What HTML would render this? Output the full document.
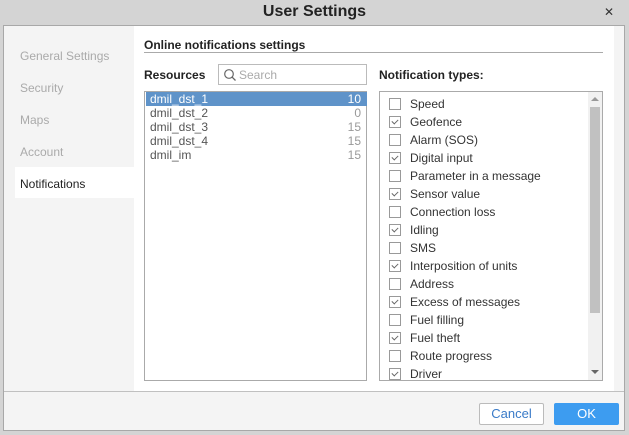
<!DOCTYPE html>
<html><head><style>
*{box-sizing:border-box;margin:0;padding:0}
body{width:629px;height:435px;background:#d4d4d4;font-family:"Liberation Sans",Arial,sans-serif;font-size:12px;position:relative;overflow:hidden;color:#222}
.abs{position:absolute}
.title{left:0;top:0;width:629px;height:25px;text-align:center;font-weight:bold;font-size:16px;line-height:23px;color:#222}
.x{left:604px;top:5px;font-size:12px;color:#333}
.dlg{left:3px;top:25px;width:622px;height:406px;background:#f4f4f4;border:1px solid #a8a8a8}
.side{left:0;top:0;width:130px;height:365px;background:#f4f4f4}
.si{left:16px;color:#aaa;font-size:12px}
.main{left:130px;top:0;width:480px;height:365px;background:#fff}
.foot{left:0;top:365px;width:620px;height:1px;background:#c0c0c0}
.row{position:absolute;left:1px;width:221px;height:14px;line-height:14px;padding:0 6px 0 4px;color:#555}
.row span{float:right;color:#999}
.nt{position:absolute;left:9px;height:18px;line-height:18px;color:#333}
.cb{display:inline-block;width:12px;height:12px;border:1px solid #999;vertical-align:-2px;margin-right:9px;background:#fff;position:relative}
.cb.c::after{content:"";position:absolute;left:3px;top:1px;width:3px;height:5px;border:solid #666;border-width:0 1.5px 1.5px 0;transform:rotate(45deg)}
.btn{position:absolute;top:377px;width:65px;height:22px;border-radius:2px;text-align:center;line-height:20px;font-size:13px}
</style></head><body>
<div class="abs title">User Settings</div>
<div class="abs x">✕</div>
<div class="abs dlg">
 <div class="abs side"></div>
 <div class="abs" style="left:11px;top:141px;width:119px;height:31px;background:#fff"></div>
 <div class="abs si" style="top:23px">General Settings</div>
 <div class="abs si" style="top:55px">Security</div>
 <div class="abs si" style="top:87px">Maps</div>
 <div class="abs si" style="top:119px">Account</div>
 <div class="abs si" style="top:151px;color:#222">Notifications</div>
 <div class="abs main">
  <div class="abs" style="left:10px;top:12px;font-weight:bold;color:#222">Online notifications settings</div>
  <div class="abs" style="left:10px;top:26px;width:459px;height:1px;background:#aaa"></div>
  <div class="abs" style="left:10px;top:42px;font-weight:bold;color:#222">Resources</div>
  <div class="abs" style="left:84px;top:38px;width:149px;height:21px;border:1px solid #bbb">
   <svg class="abs" style="left:4px;top:3px" width="14" height="14" viewBox="0 0 14 14"><circle cx="6" cy="6" r="4.3" fill="none" stroke="#666" stroke-width="1.2"/><line x1="9.2" y1="9.2" x2="12.5" y2="12.5" stroke="#666" stroke-width="1.3"/></svg>
   <div class="abs" style="left:20px;top:3px;color:#aaa">Search</div>
  </div>
  <div class="abs" style="left:10px;top:65px;width:223px;height:290px;border:1px solid #aaa">
   <div class="row" style="top:0;background:#5f93c9;color:#fff">dmil_dst_1<span style="color:#fff">10</span></div>
   <div class="row" style="top:14px">dmil_dst_2<span>0</span></div>
   <div class="row" style="top:28px">dmil_dst_3<span>15</span></div>
   <div class="row" style="top:42px">dmil_dst_4<span>15</span></div>
   <div class="row" style="top:56px">dmil_im<span>15</span></div>
  </div>
  <div class="abs" style="left:245px;top:42px;font-weight:bold;color:#222">Notification types:</div>
  <div class="abs" style="left:245px;top:65px;width:224px;height:290px;border:1px solid #aaa;overflow:hidden">
   <div class="nt" style="top:3px"><i class="cb"></i>Speed</div>
   <div class="nt" style="top:21px"><i class="cb c"></i>Geofence</div>
   <div class="nt" style="top:39px"><i class="cb"></i>Alarm (SOS)</div>
   <div class="nt" style="top:57px"><i class="cb c"></i>Digital input</div>
   <div class="nt" style="top:75px"><i class="cb"></i>Parameter in a message</div>
   <div class="nt" style="top:93px"><i class="cb c"></i>Sensor value</div>
   <div class="nt" style="top:111px"><i class="cb"></i>Connection loss</div>
   <div class="nt" style="top:129px"><i class="cb c"></i>Idling</div>
   <div class="nt" style="top:147px"><i class="cb"></i>SMS</div>
   <div class="nt" style="top:165px"><i class="cb c"></i>Interposition of units</div>
   <div class="nt" style="top:183px"><i class="cb"></i>Address</div>
   <div class="nt" style="top:201px"><i class="cb c"></i>Excess of messages</div>
   <div class="nt" style="top:219px"><i class="cb"></i>Fuel filling</div>
   <div class="nt" style="top:237px"><i class="cb c"></i>Fuel theft</div>
   <div class="nt" style="top:255px"><i class="cb"></i>Route progress</div>
   <div class="nt" style="top:273px"><i class="cb c"></i>Driver</div>
   <div class="abs" style="left:208px;top:0;width:14px;height:288px;background:#f1f1f1"></div>
   <div class="abs" style="left:210px;top:15px;width:10px;height:206px;background:#c1c1c1"></div>
   <div class="abs" style="left:211px;top:5px;width:0;height:0;border:4px solid transparent;border-bottom:4px solid #999;border-top:0"></div>
   <div class="abs" style="left:211px;top:278px;width:0;height:0;border:4px solid transparent;border-top:4px solid #666;border-bottom:0"></div>
  </div>
 </div>
 <div class="abs foot"></div>
 <div class="btn" style="left:475px;background:#fff;border:1px solid #bbb;color:#3a7bc8">Cancel</div>
 <div class="btn" style="left:550px;background:#3d9cf0;border:1px solid #3d9cf0;color:#fff">OK</div>
</div>
</body></html>
